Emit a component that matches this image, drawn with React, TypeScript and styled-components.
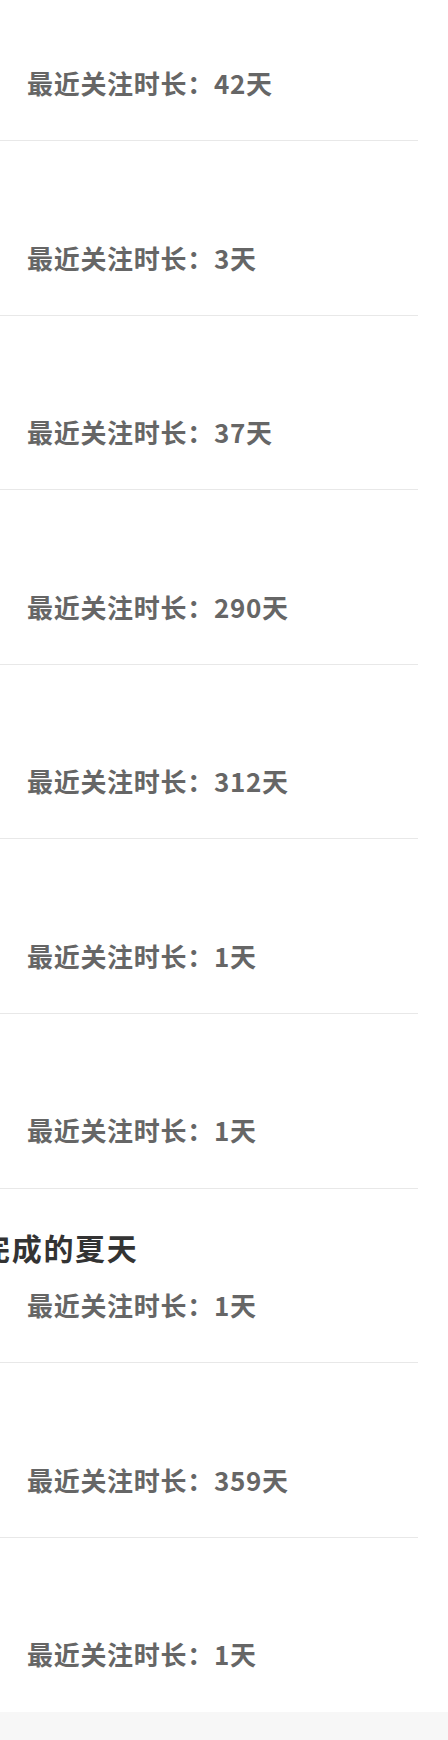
import styled, { createGlobalStyle } from "styled-components"

const GlobalStyle = createGlobalStyle`
    html, body {
        margin: 0;
        padding: 0;
        background: #f7f7f7;
    }
    body {
        font-family: "Noto Sans CJK SC", "Noto Sans", sans-serif;
        overflow: hidden;
    }
`

const Page = styled.div`
    width: 448px;
    height: 1740px;
    overflow: hidden;
`

const List = styled.ul`
    list-style: none;
    margin: -33.6px 0 0 0;
    padding: 0;
    background: #fff;
`

const Row = styled.li<{ $last: boolean }>`
    box-sizing: border-box;
    height: 174.6px;
    margin-right: 30px;
    padding: 38px 0 0 27px;
    border-bottom: ${p => (p.$last ? "none" : "1px solid #e8e8e8")};
`

const Title = styled.div`
    height: 40px;
    margin-left: -47px;
    font-size: 30px;
    line-height: 40px;
    font-weight: 700;
    letter-spacing: 1.7px;
    color: #333;
    white-space: nowrap;
`

const Meta = styled.div`
    margin-top: 20.5px;
    font-size: 26px;
    line-height: 36px;
    font-weight: 700;
    letter-spacing: 0.7px;
    color: #666;
    white-space: nowrap;
`

type Follow = {
    title: string
    days: number
}

const follows: Follow[] = [
    { title: "", days: 42 },
    { title: "", days: 3 },
    { title: "", days: 37 },
    { title: "", days: 290 },
    { title: "", days: 312 },
    { title: "", days: 1 },
    { title: "", days: 1 },
    { title: "完成的夏天", days: 1 },
    { title: "", days: 359 },
    { title: "", days: 1 },
]

const App = () => {
    return (
        <Page>
            <GlobalStyle />
            <List>
                {follows.map((f, i) => (
                    <Row key={i} $last={i === follows.length - 1}>
                        <Title>{f.title}</Title>
                        <Meta>最近关注时长：{f.days}天</Meta>
                    </Row>
                ))}
            </List>
        </Page>
    )
}

export default App
